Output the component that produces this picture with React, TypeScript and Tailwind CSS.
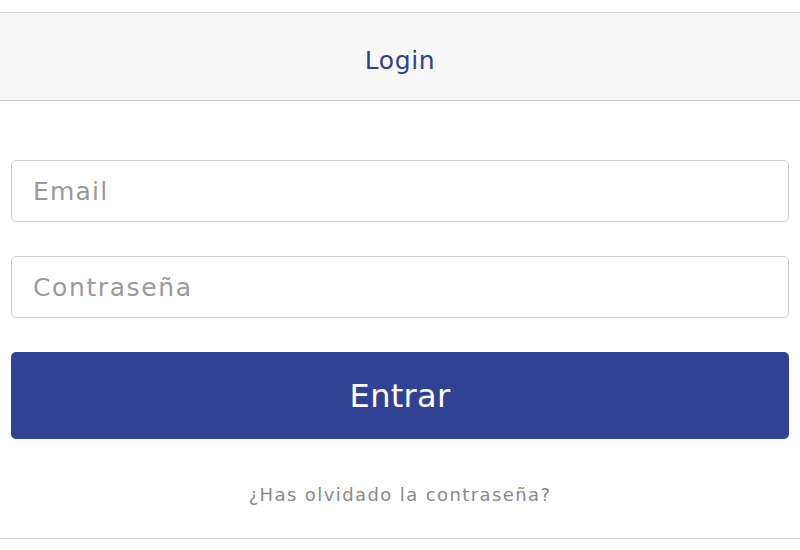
const LoginPage = () => {
    return (
        <div className="w-[800px] h-[550px] bg-white flex flex-col pt-3 font-['DejaVu_Sans',sans-serif]">
            <div className="h-[89px] bg-[#f8f8f8] border-y border-[#d0d0d0] flex items-center justify-center pt-[8px]">
                <h1 className="text-[25px] tracking-[0.6px] text-[#2f3f8f]">Login</h1>
            </div>
            <form className="flex flex-col px-[11px] pt-[59px] gap-[34px]" onSubmit={(e) => e.preventDefault()}>
                <input
                    type="email"
                    placeholder="Email"
                    className="h-[62px] w-full border border-[#cfcfcf] rounded-[5px] px-[21px] text-[25px] tracking-[1.2px] outline-none placeholder:text-[#9a9a9a]"
                />
                <input
                    type="password"
                    placeholder="Contraseña"
                    className="h-[62px] w-full border border-[#cfcfcf] rounded-[5px] px-[21px] text-[25px] tracking-[1.6px] outline-none placeholder:text-[#9a9a9a]"
                />
                <button type="submit" className="h-[87px] w-full bg-[#314295] rounded-[5px] text-white text-[32px] tracking-[0.3px]">
                    Entrar
                </button>
            </form>
            <div className="flex justify-center pt-[42px]">
                <a href="#" className="text-[18px] tracking-[1.4px] text-[#8a8a8a]">¿Has olvidado la contraseña?</a>
            </div>
            <div className="mt-auto mb-[11px] border-b border-[#d0d0d0]" />
        </div>
    );
};

export default function App() {
    return <LoginPage />;
}
